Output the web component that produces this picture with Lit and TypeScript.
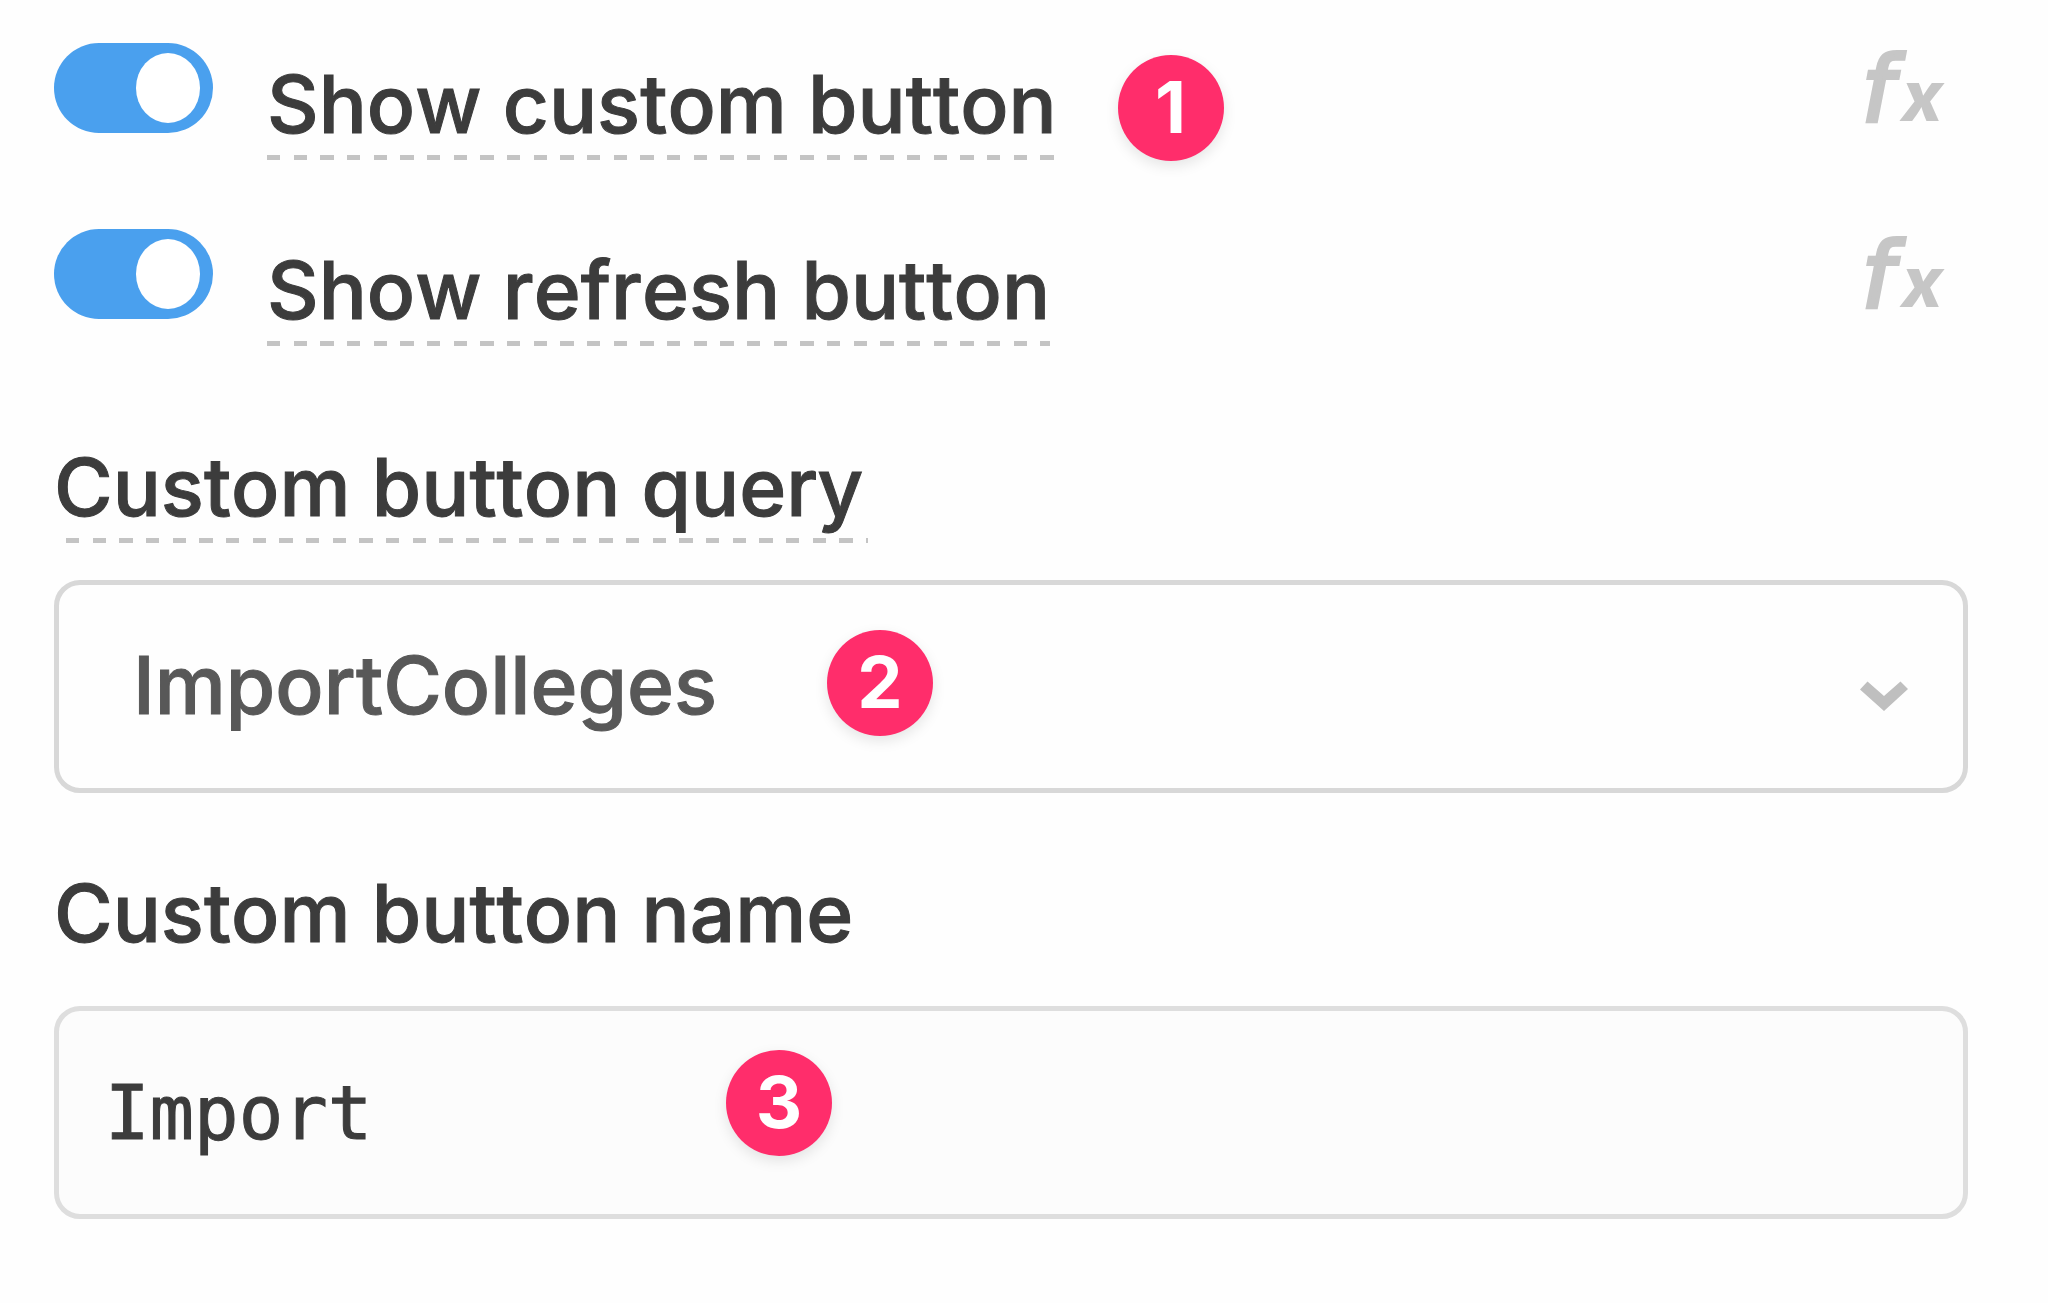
import { LitElement, html, css } from "lit";
import { customElement, property } from "lit/decorators.js";

@customElement("step-badge")
export class StepBadge extends LitElement {
  static styles = css`
    :host {
      display: flex;
      justify-content: center;
      flex: none;
      width: 106px;
      height: 106px;
      border-radius: 50%;
      background: #ff2d6b;
      box-shadow: 0 5px 14px rgba(0, 0, 0, 0.1);
      color: #fff;
      font: 700 72px/104px Inter, "Liberation Sans", sans-serif;
      pointer-events: none;
    }
  `;

  render() {
    return html`<slot></slot>`;
  }
}

@customElement("toggle-row")
export class ToggleRow extends LitElement {
  @property() label = "";
  @property() step = "";

  static styles = css`
    :host {
      display: flex;
      align-items: flex-start;
    }
    .switch {
      appearance: none;
      flex: none;
      display: flex;
      align-items: center;
      width: 159px;
      height: 90px;
      margin: 0 54px 0 0;
      padding: 0 13px;
      box-sizing: border-box;
      border-radius: 45px;
      background: #c4c4c4;
      cursor: pointer;
    }
    .switch::before {
      content: "";
      width: 64px;
      height: 70px;
      border-radius: 50%;
      background: #fff;
    }
    .switch:checked {
      justify-content: flex-end;
      background: #4aa0ee;
    }
    .label {
      margin-top: 13px;
      padding-bottom: 8px;
      font-weight: 500;
      font-size: 80px;
      line-height: 96px;
      font-kerning: none;
      -webkit-text-stroke: 1px currentColor;
      white-space: nowrap;
      background: repeating-linear-gradient(
          90deg,
          #c4c4c4 0 13px,
          transparent 13px 27px,
          #c4c4c4 27px 40px,
          transparent 40px 53px,
          #c4c4c4 53px 67px,
          transparent 67px 80px
        )
        left bottom / 100% 5px no-repeat;
    }
    .badge {
      margin: 12px 0 -1px 61px;
    }
    .fx {
      display: flex;
      align-items: baseline;
      gap: 8px;
      margin: 0 25px 0 auto;
      padding: 0;
      border: 0;
      background: none;
      color: #c6c6c6;
      font: oblique 400 90px/94px "DejaVu Sans", sans-serif;
      cursor: pointer;
    }
    .fx-f {
      -webkit-text-stroke: 4px currentColor;
    }
    .fx-x {
      font: italic 800 70px/90px Inter, "Liberation Sans", sans-serif;
    }
  `;

  render() {
    return html`
      <input class="switch" id="switch" type="checkbox" role="switch" checked />
      <label class="label" for="switch">${this.label}</label>
      ${this.step
        ? html`<step-badge class="badge">${this.step}</step-badge>`
        : null}
      <button class="fx" type="button">
        <span class="fx-f">f</span><span class="fx-x">x</span>
      </button>
    `;
  }
}

@customElement("app-root")
export class AppRoot extends LitElement {
  static styles = css`
    :host {
      display: block;
      min-height: 100vh;
      box-sizing: border-box;
      padding: 43px 80px 0 54px;
      background: #fefefe;
      color: #3c3c3c;
      font-family: Inter, "Liberation Sans", sans-serif;
    }
    .toggles {
      display: flex;
      flex-direction: column;
      gap: 69px;
      margin-bottom: 93px;
    }
    .field {
      display: flex;
      flex-direction: column;
      align-items: flex-start;
      gap: 37px;
      padding-bottom: 72px;
    }
    .label {
      padding-bottom: 8px;
      font-weight: 500;
      font-size: 80px;
      line-height: 96px;
      font-kerning: none;
      -webkit-text-stroke: 1px currentColor;
      white-space: nowrap;
    }
    .hinted {
      padding-right: 5px;
      background: repeating-linear-gradient(
          90deg,
          #c4c4c4 0 13px,
          transparent 13px 27px,
          #c4c4c4 27px 40px,
          transparent 40px 53px,
          #c4c4c4 53px 67px,
          transparent 67px 80px
        )
        12px bottom / 100% 5px no-repeat;
    }
    .control {
      position: relative;
      display: flex;
      align-self: stretch;
    }
    .select,
    .input {
      appearance: none;
      flex: 1;
      min-width: 0;
      height: 213px;
      margin: 0;
      box-sizing: border-box;
      border: 5px solid #d8d8d8;
      border-radius: 26px;
      outline: 0;
      -webkit-text-stroke: 1px currentColor;
    }
    .select {
      padding: 0 160px 4px 74px;
      background: #fefefe;
      color: #585858;
      font: 500 80px/96px Inter, "Liberation Sans", sans-serif;
    }
    .input {
      padding: 0 46px;
      border-color: #dedede;
      background: #fcfcfc;
      color: #3c3c3c;
      font: 74px/96px "DejaVu Sans Mono", "Liberation Mono", monospace;
    }
    .chevron {
      position: absolute;
      right: 60px;
      top: 101px;
      width: 48px;
      height: 30px;
      fill: #bfbfbf;
      pointer-events: none;
    }
    .badge {
      position: absolute;
    }
    .badge-query {
      left: 773px;
      top: 50px;
    }
    .badge-name {
      left: 672px;
      top: 44px;
    }
  `;

  render() {
    return html`
      <div class="toggles">
        <toggle-row label="Show custom button" step="1"></toggle-row>
        <toggle-row label="Show refresh button"></toggle-row>
      </div>
      <div class="field">
        <label class="label hinted" for="query">Custom button query</label>
        <div class="control">
          <select class="select" id="query">
            <option>ImportColleges</option>
          </select>
          <svg class="chevron" viewBox="0 0 48 30" aria-hidden="true">
            <path d="M0 8.500 7.500 0.500 24 15 40.500 0.500 48 8 24 30Z" />
          </svg>
          <step-badge class="badge badge-query">2</step-badge>
        </div>
      </div>
      <div class="field">
        <label class="label" for="name">Custom button name</label>
        <div class="control">
          <input class="input" id="name" type="text" value="Import" />
          <step-badge class="badge badge-name">3</step-badge>
        </div>
      </div>
    `;
  }
}
